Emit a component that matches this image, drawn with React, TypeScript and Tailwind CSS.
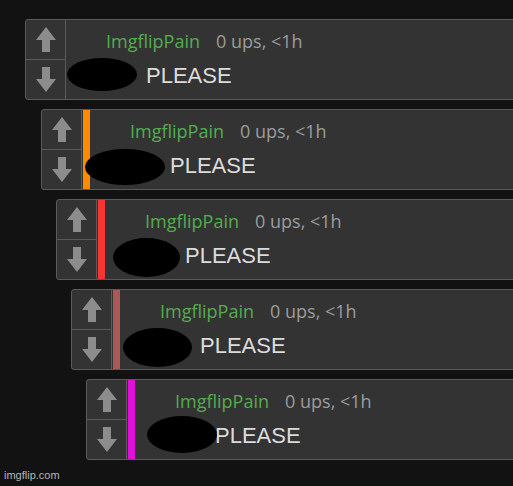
import React from 'react';

type Reply = {
    indent: string;
    bar?: string;
    blob: string;
};

const replies: Reply[] = [
    { indent: 'ml-[25px]', blob: 'left-[1px] top-[38px] w-[70px] h-[33px]' },
    { indent: 'ml-[41px]', bar: 'bg-[#ff8a00]', blob: 'left-[-5px] top-[39px] w-[80px] h-[36px]' },
    { indent: 'ml-[56px]', bar: 'bg-[#f83535]', blob: 'left-[8px] top-[38px] w-[67px] h-[39px]' },
    { indent: 'ml-[71px]', bar: 'bg-[#a85a58]', blob: 'left-[3px] top-[38px] w-[69px] h-[39px]' },
    { indent: 'ml-[86px]', bar: 'bg-[#e010d8]', blob: 'left-[12px] top-[36px] w-[70px] h-[37px]' },
];

const Arrow = ({ down }: { down?: boolean }) => (
    <svg width="20" height="25" viewBox="0 0 20 25" className={down ? 'rotate-180' : ''}>
        <polygon points="10,0 20,13 14,13 14,25 6,25 6,13 0,13" fill="#8c8c8c" />
    </svg>
);

const Comment = ({ reply }: { reply: Reply }) => (
    <div className={`${reply.indent} flex w-[560px] h-[81px] shrink-0 rounded-[3px] border border-[#5a5a5a] bg-[#333333] overflow-hidden`}>
        {/* Vote column */}
        <div className="flex flex-col w-[40px] shrink-0 border-r border-[#5a5a5a]">
            <div className="flex-1 flex items-center justify-center border-b border-[#5a5a5a]">
                <Arrow />
            </div>
            <div className="flex-1 flex items-center justify-center">
                <Arrow down />
            </div>
        </div>

        {reply.bar && <div className={`w-[7px] ml-[1px] shrink-0 ${reply.bar}`} />}

        {/* Body */}
        <div className="relative flex-1">
            <div className="flex items-center pl-[40px] pt-[11px] h-[31px] font-['Open_Sans',sans-serif] text-[18px] leading-[20px]">
                <span className="text-[#53ad4f]">ImgflipPain</span>
                <span className="ml-[16px] text-[#9c9c9c]">0 ups, &lt;1h</span>
            </div>
            <div className="pl-[80px] mt-[11px] font-['Liberation_Sans',Arial,sans-serif] text-[22px] leading-[28px] text-[#dcdcdc]">
                PLEASE
            </div>
            <div className={`absolute ${reply.blob} bg-black rounded-[50%]`} />
        </div>
    </div>
);

export default function App() {
    return (
        <div className="relative w-[513px] h-[486px] overflow-hidden bg-[#121212]">
            <div className="flex flex-col gap-[9px] pt-[19px]">
                {replies.map((reply, i) => (
                    <Comment key={i} reply={reply} />
                ))}
            </div>
            <div className="absolute left-[4px] bottom-[3px] font-['Liberation_Sans',Arial,sans-serif] text-[11px] text-[#b4b4b4]">
                imgflip.com
            </div>
        </div>
    );
}
